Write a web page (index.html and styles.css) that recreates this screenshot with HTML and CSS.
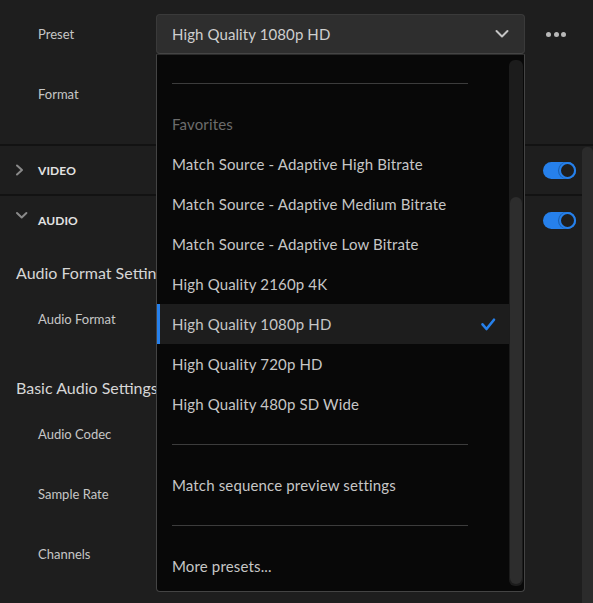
FILE: index.html
```html
<!DOCTYPE html>
<html>
<head>
<meta charset="utf-8">
<link rel="stylesheet" href="styles.css">
</head>
<body>
<div class="app">
  <div class="top">
    <div class="field">
      <span class="label">Preset</span>
      <div class="select">
        <span class="select-text">High Quality 1080p HD</span>
        <svg class="select-chev" width="14" height="10" viewBox="0 0 14 10"><polyline points="1.5,2 7,7.5 12.5,2" fill="none" stroke="#c4c4c4" stroke-width="2" stroke-linecap="round" stroke-linejoin="round"/></svg>
      </div>
      <div class="more"><span class="dot"></span><span class="dot"></span><span class="dot"></span></div>
    </div>
    <div class="field">
      <span class="label">Format</span>
    </div>
  </div>
  <div class="body">
    <div class="content">
      <div class="section-row bordered">
        <svg class="chev" width="24" height="24" viewBox="0 0 24 24"><polyline points="3,7.5 8,12 3,16.5" fill="none" stroke="#8a8a8a" stroke-width="2" stroke-linecap="round" stroke-linejoin="round"/></svg>
        <span class="section-name">VIDEO</span>
        <span class="toggle"><span class="knob"></span></span>
      </div>
      <div class="section-row">
        <svg class="chev chev-down" width="24" height="24" viewBox="0 0 24 24"><polyline points="3,6 7.7,10.5 12.4,6" fill="none" stroke="#8a8a8a" stroke-width="2" stroke-linecap="round" stroke-linejoin="round"/></svg>
        <span class="section-name">AUDIO</span>
        <span class="toggle"><span class="knob"></span></span>
      </div>
      <div class="group-title first">Audio Format Settings</div>
      <div class="field sub"><span class="label">Audio Format</span></div>
      <div class="group-title second">Basic Audio Settings</div>
      <div class="fields">
        <div class="field"><span class="label">Audio Codec</span></div>
        <div class="field"><span class="label">Sample Rate</span></div>
        <div class="field"><span class="label">Channels</span></div>
      </div>
    </div>
    <div class="vscroll"><div class="vthumb"></div></div>
  </div>

  <div class="menu">
    <div class="menu-list">
      <div class="sep top-sep"></div>
      <div class="menu-header">Favorites</div>
      <div class="menu-item">Match Source - Adaptive High Bitrate</div>
      <div class="menu-item">Match Source - Adaptive Medium Bitrate</div>
      <div class="menu-item">Match Source - Adaptive Low Bitrate</div>
      <div class="menu-item">High Quality 2160p 4K</div>
      <div class="menu-item selected">
        <span>High Quality 1080p HD</span>
        <svg class="check" width="16" height="14" viewBox="0 0 16 14"><polyline points="2.5,7.3 6.5,12 14,2.7" fill="none" stroke="#2680eb" stroke-width="2.6" stroke-linecap="round" stroke-linejoin="round"/></svg>
      </div>
      <div class="menu-item">High Quality 720p HD</div>
      <div class="menu-item">High Quality 480p SD Wide</div>
      <div class="sep"></div>
      <div class="menu-item">Match sequence preview settings</div>
      <div class="sep"></div>
      <div class="menu-item">More presets...</div>
    </div>
    <div class="mscroll"><div class="mthumb"></div></div>
  </div>
</div>
</body>
</html>
```

FILE: styles.css
```css
* { box-sizing: border-box; }

html, body {
  margin: 0;
  padding: 0;
}

body {
  background: #1e1e1e;
  font-family: Lato, "Open Sans", sans-serif;
  color: #c8c8c8;
  width: 593px;
  height: 603px;
  overflow: hidden;
}

.app {
  position: relative;
  width: 593px;
  height: 603px;
  overflow: hidden;
}

/* top */
.top {
  display: flex;
  flex-direction: column;
  gap: 20px;
  padding: 14px 0 30px;
  border-bottom: 2px solid #121212;
}

.field {
  display: flex;
  align-items: center;
  height: 40px;
  padding-left: 38px;
}

.label {
  width: 118px;
  flex: none;
  font-size: 13px;
  color: #c6c6c6;
}

.select {
  width: 369px;
  height: 40px;
  display: flex;
  align-items: center;
  justify-content: space-between;
  padding: 0 15px 0 15px;
  background: #2e2e2e;
  border: 1px solid #3a3a3a;
  border-bottom-color: #454545;
  border-radius: 4px;
}

.select-text {
  font-size: 15px;
  color: #cfcfcf;
  letter-spacing: 0.1px;
}

.more {
  display: flex;
  gap: 2.5px;
  margin-left: 21px;
}

.dot {
  width: 5px;
  height: 5px;
  border-radius: 50%;
  background: #b8b8b8;
}

/* body */
.body {
  display: flex;
  height: 457px;
}

.content {
  flex: 1;
}

.section-row {
  display: flex;
  align-items: center;
  height: 48px;
  padding: 0 6px 0 14px;
}

.section-row.bordered {
  border-bottom: 2px solid #121212;
  height: 50px;
}

.chev {
  flex: none;
}

.chev-down {
  position: relative;
  top: -1px;
}

.section-name {
  font-size: 12px;
  font-weight: 700;
  color: #e2e2e2;
  letter-spacing: 0.1px;
}

.toggle {
  margin-left: auto;
  width: 33px;
  height: 17px;
  border-radius: 9px;
  background: #2680eb;
  display: flex;
  justify-content: flex-end;
}

.knob {
  width: 17px;
  height: 17px;
  border-radius: 50%;
  background: #1e1e1e;
  border: 2px solid #2680eb;
  box-shadow: -1px 0 0 #1b5fae;
}

.group-title {
  font-size: 16px;
  line-height: 20px;
  color: #d6d6d6;
  padding-left: 16px;
  white-space: nowrap;
}

.group-title.first {
  margin-top: 19px;
}

.field.sub {
  margin-top: 16px;
}

.group-title.second {
  margin-top: 39px;
}

.fields {
  display: flex;
  flex-direction: column;
  gap: 20px;
  margin-top: 16px;
}

.vscroll {
  width: 11px;
  flex: none;
  padding-top: 1px;
}

.vthumb {
  height: 100%;
  background: #2b2b2b;
  border-radius: 5px 5px 0 0;
}

/* dropdown menu overlay */
.menu {
  position: absolute;
  left: 156px;
  top: 54px;
  width: 369px;
  height: 538px;
  background: #080808;
  border: 1px solid #444444;
  border-top-color: #2a2a2a;
  border-radius: 0 0 4px 4px;
  display: flex;
  overflow: hidden;
}

.menu-list {
  flex: 1;
  padding-top: 8px;
  overflow: hidden;
}

.sep {
  height: 1px;
  background: #3c3c3c;
  margin: 20px 41px 20px 15px;
}

.menu-header,
.menu-item {
  height: 40px;
  line-height: 40px;
  font-size: 15px;
  letter-spacing: 0.15px;
  padding-left: 15px;
  white-space: nowrap;
}

.menu-header {
  color: #6c6c6c;
}

.menu-item {
  color: #c6c6c6;
}

.menu-item.selected {
  display: flex;
  align-items: center;
  justify-content: space-between;
  padding-right: 13px;
  background: #1d1d1d;
  box-shadow: inset 3px 0 0 #2680eb;
}

.check {
  display: block;
}

.mscroll {
  width: 14px;
  flex: none;
  margin: 5px 1px 5px 0;
  background: #1c1c1c;
  border-radius: 6px;
  padding: 137px 1px 2px 1px;
}

.mthumb {
  height: 100%;
  background: #2d2d2d;
  border-radius: 6px;
}
```
